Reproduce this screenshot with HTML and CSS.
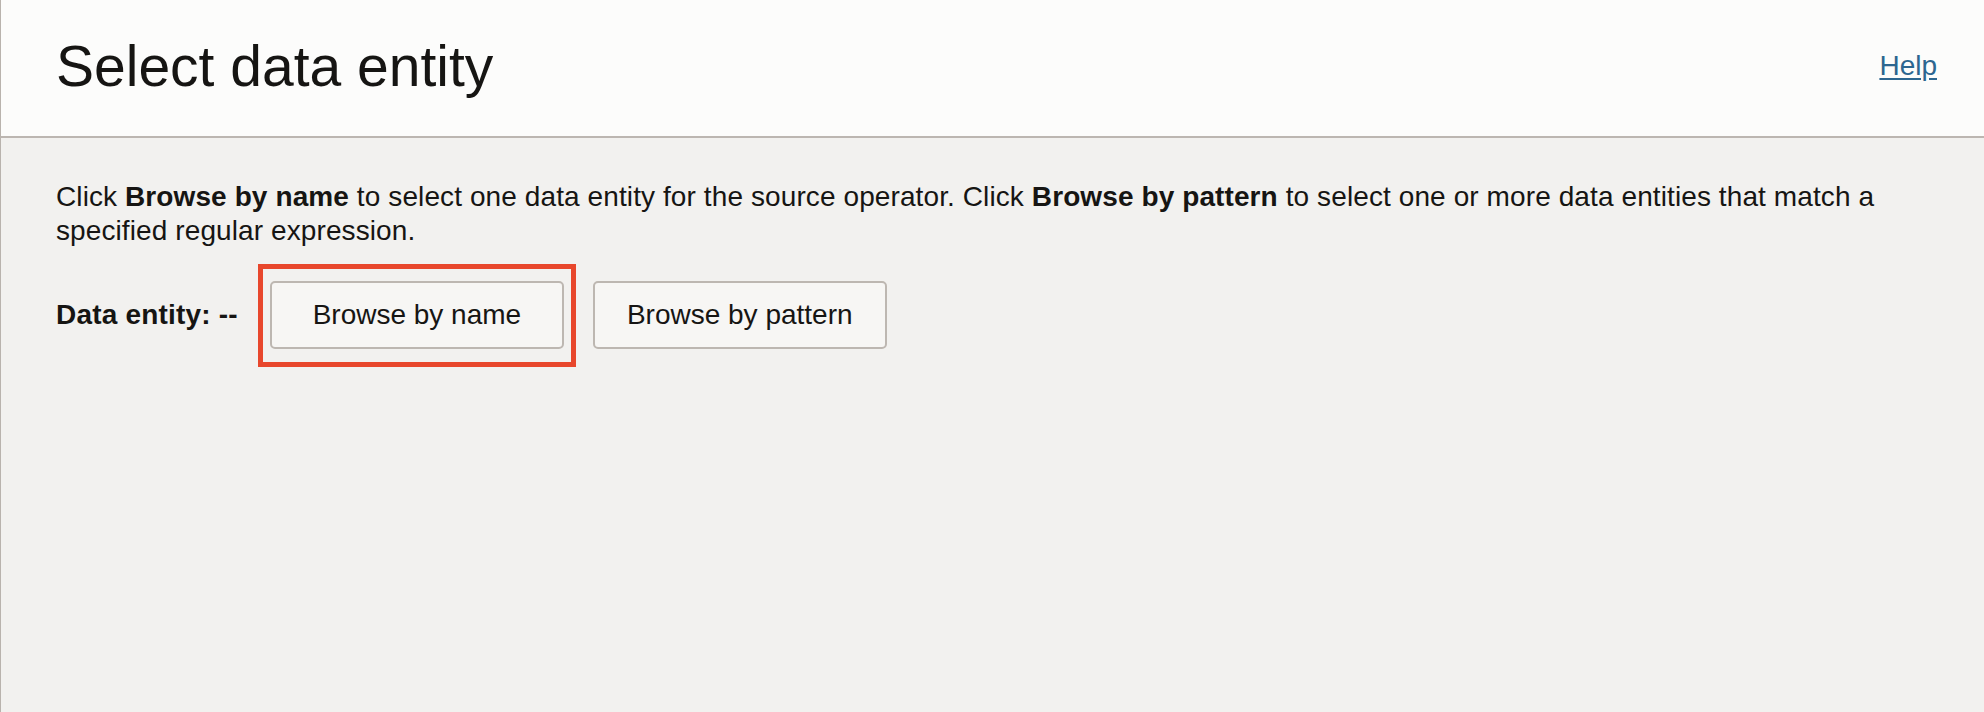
FILE: index.html
```html
<!DOCTYPE html>
<html lang="en">
<head>
<meta charset="utf-8">
<title>Select data entity</title>
<link rel="stylesheet" href="styles.css">
</head>
<body>
<div class="page">
  <header class="header">
    <h1 class="title">Select data entity</h1>
    <a class="help" href="#">Help</a>
  </header>
  <main class="content">
    <p class="intro">Click <b>Browse by name</b> to select one data entity for the source operator. Click <b>Browse by pattern</b> to select one or more data entities that match a specified regular expression.</p>
    <div class="row">
      <span class="label">Data entity: --</span>
      <span class="highlight-wrap">
        <button class="btn btn-name" type="button">Browse by name</button>
        <span class="highlight"></span>
      </span>
      <button class="btn btn-pattern" type="button">Browse by pattern</button>
    </div>
  </main>
</div>
</body>
</html>
```

FILE: styles.css
```css
html, body {
  margin: 0;
  padding: 0;
  height: 100%;
}
body {
  font-family: "Liberation Sans", Arial, Helvetica, sans-serif;
  color: #161513;
  background: #f2f1ef;
}
.page {
  height: 100%;
  display: flex;
  flex-direction: column;
  border-left: 1px solid #b9b3ad;
  box-sizing: border-box;
}
.header {
  display: flex;
  align-items: center;
  justify-content: space-between;
  background: #fcfcfb;
  border-bottom: 2px solid #bcb6b1;
  padding: 34px 47px 38px 55px;
}
.title {
  margin: 0;
  font-size: 57px;
  line-height: 64px;
  font-weight: 400;
  color: #161513;
}
.help {
  font-size: 28px;
  line-height: 34px;
  color: #2c6690;
  text-decoration: underline;
  text-underline-offset: 3px;
}
.content {
  flex: 1;
  padding: 42px 47px 0 55px;
}
.intro {
  margin: 0;
  font-size: 28px;
  line-height: 34px;
  letter-spacing: 0.1px;
}
.intro b {
  font-weight: 700;
}
.row {
  display: flex;
  align-items: center;
  margin-top: 33px;
}
.label {
  font-size: 28px;
  font-weight: 700;
  margin-right: 32px;
  letter-spacing: 0.2px;
}
.highlight-wrap {
  position: relative;
  display: inline-flex;
  margin-right: 29px;
}
.highlight {
  position: absolute;
  left: -12px;
  right: -12px;
  top: -17px;
  bottom: -18px;
  border: 5px solid #e8472c;
  pointer-events: none;
}
.btn {
  box-sizing: border-box;
  height: 68px;
  padding: 0 32px;
  font-family: "Liberation Sans", Arial, Helvetica, sans-serif;
  font-size: 28px;
  color: #161513;
  background: #f7f6f4;
  border: 2px solid #bdb7b1;
  border-radius: 5px;
}
.btn-name {
  min-width: 294px;
}
.btn-pattern {
  min-width: 292px;
}
```
